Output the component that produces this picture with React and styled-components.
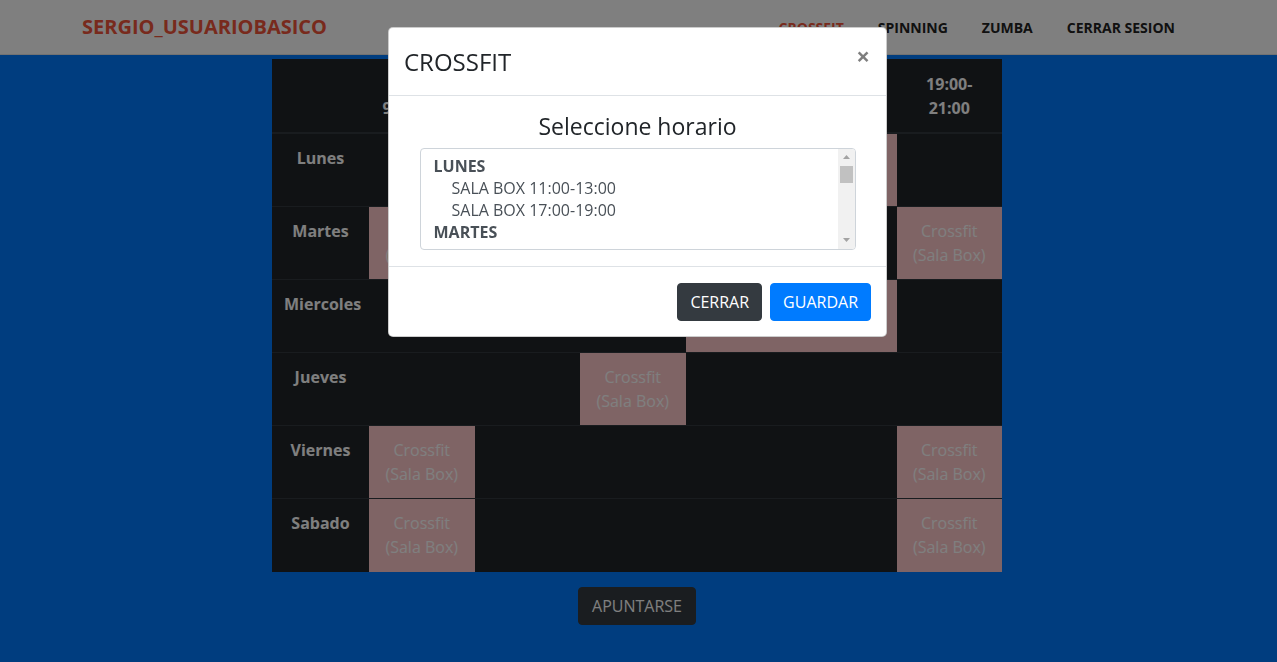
import React from 'react';
import styled, { createGlobalStyle } from 'styled-components';

const GlobalStyle = createGlobalStyle`
  * {
    box-sizing: border-box;
  }
  html, body {
    margin: 0;
    padding: 0;
  }
  body {
    min-height: 100vh;
    background: #007bff;
    color: #212529;
    font-family: "Open Sans", "Noto Sans", sans-serif;
    font-size: 16px;
    line-height: 1.5;
  }
`;

const Navbar = styled.nav`
  display: flex;
  align-items: center;
  justify-content: space-between;
  height: 55px;
  padding: 0 102px 0 82px;
  background: #fff;
  border-bottom: 1px solid #e4e4e4;
`;

const Brand = styled.a`
  color: #f0553a;
  font-size: 20px;
  font-weight: 700;
  text-decoration: none;
`;

const NavList = styled.ul`
  display: flex;
  gap: 34px;
  margin: 0;
  padding: 0;
  list-style: none;
`;

const NavLink = styled.a`
  color: ${(p) => (p.$active ? '#f0553a' : '#222')};
  font-size: 14px;
  font-weight: 700;
  text-decoration: none;
  text-transform: uppercase;
`;

const Main = styled.main`
  display: flex;
  flex-direction: column;
  align-items: center;
  padding: 4px 3px 0 0;
`;

const Schedule = styled.table`
  width: 730px;
  table-layout: fixed;
  border-collapse: collapse;
  background: #212529;
  color: #fff;
`;

const HeadCell = styled.th`
  width: ${(p) => (p.$first ? '97px' : 'auto')};
  height: 74px;
  padding: 12px;
  border-bottom: 2px solid #32383e;
  font-weight: 700;
  text-align: center;
  vertical-align: bottom;
`;

const DayCell = styled.th`
  height: 73px;
  padding: 12px;
  border-top: 1px solid #32383e;
  font-weight: 700;
  text-align: center;
  vertical-align: top;
`;

const SlotCell = styled.td`
  padding: 12px;
  border-top: 1px solid #32383e;
  background: ${(p) => (p.$booked ? '#ffc9cb' : 'transparent')};
  color: #fff;
  text-align: center;
  vertical-align: top;
`;

const Button = styled.button`
  padding: 6px 12px;
  border: 1px solid ${(p) => (p.$primary ? '#007bff' : '#343a40')};
  border-radius: 4px;
  background: ${(p) => (p.$primary ? '#007bff' : '#343a40')};
  color: #fff;
  font-family: inherit;
  font-size: 16px;
  line-height: 1.5;
`;

const JoinButton = styled(Button)`
  margin-top: 15px;
  padding: 6px 13px;
`;

const Backdrop = styled.div`
  position: fixed;
  inset: 0;
  background: rgba(0, 0, 0, 0.5);
`;

const ModalLayer = styled.div`
  position: fixed;
  inset: 0;
  display: flex;
  justify-content: center;
  align-items: flex-start;
  padding: 27px 2px 0 0;
`;

const Dialog = styled.div`
  width: 499px;
  background: #fff;
  border: 1px solid rgba(0, 0, 0, 0.2);
  border-radius: 5px;
`;

const ModalHeader = styled.div`
  display: flex;
  align-items: flex-start;
  padding: 16px 16px 15px 15px;
  border-bottom: 1px solid #dee2e6;
`;

const ModalTitle = styled.h4`
  margin: 0;
  font-size: 24px;
  font-weight: 500;
  line-height: 1.5;
`;

const Close = styled.button`
  margin: -16px -16px -16px auto;
  padding: 16px;
  border: none;
  background: transparent;
  color: #000;
  opacity: 0.5;
  font-family: inherit;
  font-size: 24px;
  font-weight: 700;
  line-height: 1;
  text-shadow: 0 1px 0 #fff;
`;

const ModalBody = styled.div`
  padding: 17px 16px 16px;
`;

const Heading = styled.h4`
  margin: 0 0 7px;
  font-size: 23px;
  font-weight: 500;
  line-height: 1.2;
  text-align: center;
`;

const ListBox = styled.div`
  display: flex;
  width: 436px;
  height: 102px;
  margin: 0 auto;
  overflow: hidden;
  border: 1px solid #ced4da;
  border-radius: 4px;
  color: #495057;
`;

const ListItems = styled.div`
  flex: 1;
  padding-top: 6px;
`;

const GroupLabel = styled.div`
  padding-left: 13px;
  font-weight: 700;
  line-height: 22px;
`;

const Option = styled.div`
  padding-left: 31px;
  line-height: 22px;
`;

const Scrollbar = styled.div`
  display: flex;
  flex-direction: column;
  width: 17px;
  background: #f1f1f1;
`;

const ArrowButton = styled.div`
  display: flex;
  align-items: center;
  justify-content: center;
  height: 17px;
`;

const Thumb = styled.div`
  height: 17px;
  margin: 0 2px;
  background: #c1c1c1;
`;

const Track = styled.div`
  flex: 1;
`;

const ModalFooter = styled.div`
  display: flex;
  justify-content: flex-end;
  gap: 8px;
  padding: 16px 15px 15px;
  border-top: 1px solid #dee2e6;
`;

const slots = ['9:00-11:00', '11:00-13:00', '13:00-15:00', '15:00-17:00', '17:00-19:00', '19:00-21:00'];

const days = [
  { name: 'Lunes', booked: [1, 4] },
  { name: 'Martes', booked: [0, 5] },
  { name: 'Miercoles', booked: [3, 4] },
  { name: 'Jueves', booked: [2] },
  { name: 'Viernes', booked: [0, 5] },
  { name: 'Sabado', booked: [0, 5] },
];

const Arrow = ({ down }) => (
  <svg width="7" height="4" viewBox="0 0 7 4">
    <path d={down ? 'M0 0H7L3.5 4Z' : 'M0 4H7L3.5 0Z'} fill="#a3a3a3" />
  </svg>
);

const App = () => (
  <>
    <GlobalStyle />
    <Navbar>
      <Brand>SERGIO_USUARIOBASICO</Brand>
      <NavList>
        <li><NavLink $active>Crossfit</NavLink></li>
        <li><NavLink>Spinning</NavLink></li>
        <li><NavLink>Zumba</NavLink></li>
        <li><NavLink>Cerrar sesion</NavLink></li>
      </NavList>
    </Navbar>
    <Main>
      <Schedule>
        <thead>
          <tr>
            <HeadCell $first />
            {slots.map((s) => <HeadCell key={s}>{s}</HeadCell>)}
          </tr>
        </thead>
        <tbody>
          {days.map((d) => (
            <tr key={d.name}>
              <DayCell>{d.name}</DayCell>
              {slots.map((s, i) => {
                const booked = d.booked.includes(i);
                return (
                  <SlotCell key={s} $booked={booked}>
                    {booked && <>Crossfit<br />(Sala Box)</>}
                  </SlotCell>
                );
              })}
            </tr>
          ))}
        </tbody>
      </Schedule>
      <JoinButton>APUNTARSE</JoinButton>
    </Main>
    <Backdrop />
    <ModalLayer>
      <Dialog>
        <ModalHeader>
          <ModalTitle>CROSSFIT</ModalTitle>
          <Close>×</Close>
        </ModalHeader>
        <ModalBody>
          <Heading>Seleccione horario</Heading>
          <ListBox>
            <ListItems>
              <GroupLabel>LUNES</GroupLabel>
              <Option>SALA BOX 11:00-13:00</Option>
              <Option>SALA BOX 17:00-19:00</Option>
              <GroupLabel>MARTES</GroupLabel>
            </ListItems>
            <Scrollbar>
              <ArrowButton><Arrow /></ArrowButton>
              <Thumb />
              <Track />
              <ArrowButton><Arrow down /></ArrowButton>
            </Scrollbar>
          </ListBox>
        </ModalBody>
        <ModalFooter>
          <Button>CERRAR</Button>
          <Button $primary>GUARDAR</Button>
        </ModalFooter>
      </Dialog>
    </ModalLayer>
  </>
);

export default App;
